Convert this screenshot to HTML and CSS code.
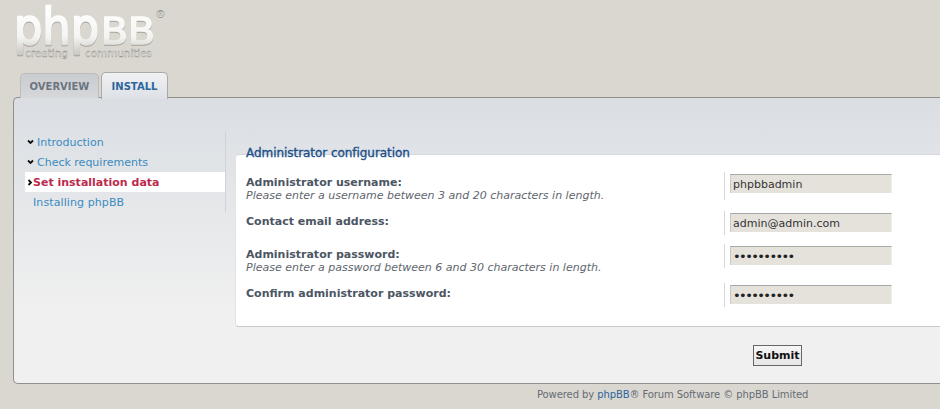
FILE: index.html
```html
<!DOCTYPE html>
<html lang="en">
<head>
  <meta charset="UTF-8" />
  <title>Administrator configuration | phpBB</title>
  <link rel="stylesheet" href="styles.css">
</head>
<body>

  <div class="logo">
    <svg width="170" height="65" viewBox="0 0 170 65">
      <defs>
        <linearGradient id="logoFill" gradientUnits="userSpaceOnUse" x1="0" y1="8" x2="0" y2="56">
          <stop offset="0" stop-color="#ffffff"/>
          <stop offset="0.6" stop-color="#f4f4f2"/>
          <stop offset="1" stop-color="#c6c5c0"/>
        </linearGradient>
      </defs>
      <text class="logo-word" x="14" y="44" textLength="85" lengthAdjust="spacingAndGlyphs" fill="url(#logoFill)" stroke="url(#logoFill)">php</text>
      <text class="logo-word logo-caps" x="101" y="44" textLength="54" lengthAdjust="spacingAndGlyphs" fill="url(#logoFill)" stroke="url(#logoFill)">BB</text>
      <text class="logo-tag" x="25" y="57" textLength="43" lengthAdjust="spacingAndGlyphs">creating</text>
      <text class="logo-tag" x="85" y="57" textLength="67" lengthAdjust="spacingAndGlyphs">communities</text>
      <text class="logo-reg" x="155" y="18">®</text>
    </svg>
  </div>

  <div class="tabs">
    <a href="#" class="tab">OVERVIEW</a>
    <a href="#" class="tab active">INSTALL</a>
  </div>

  <div class="panel">
    <div class="menu">
      <a href="#" class="done">
        <svg width="7" height="6" viewBox="0 0 7 6"><path d="M1 1.5 L3.5 4 L6 1.5" fill="none" stroke="#111" stroke-width="1.8"/></svg>
        Introduction
      </a>
      <a href="#" class="done">
        <svg width="7" height="6" viewBox="0 0 7 6"><path d="M1 1.5 L3.5 4 L6 1.5" fill="none" stroke="#111" stroke-width="1.8"/></svg>
        Check requirements
      </a>
      <a href="#" class="current">
        <svg width="6" height="7" viewBox="0 0 6 7"><path d="M1.5 1 L4 3.5 L1.5 6" fill="none" stroke="#111" stroke-width="1.8"/></svg>
        Set installation data
      </a>
      <a href="#" class="todo">Installing phpBB</a>
    </div>

    <div class="main">
      <div class="fieldset">
        <div class="legend">Administrator configuration</div>

        <div class="row row-1">
          <div class="label">
            <strong>Administrator username:</strong>
            <span>Please enter a username between 3 and 20 characters in length.</span>
          </div>
          <div class="field"><input type="text" value="phpbbadmin" /></div>
        </div>

        <div class="row row-2">
          <div class="label">
            <strong>Contact email address:</strong>
          </div>
          <div class="field"><input type="text" value="admin@admin.com" /></div>
        </div>

        <div class="row row-3">
          <div class="label">
            <strong>Administrator password:</strong>
            <span>Please enter a password between 6 and 30 characters in length.</span>
          </div>
          <div class="field"><input type="password" value="phpbbadmin" /></div>
        </div>

        <div class="row row-4">
          <div class="label">
            <strong>Confirm administrator password:</strong>
          </div>
          <div class="field"><input type="password" value="phpbbadmin" /></div>
        </div>
      </div>

      <div class="submit-row">
        <button class="submit">Submit</button>
      </div>
    </div>
  </div>

  <div class="footer">
    Powered by <a href="#">phpBB</a>® Forum Software © phpBB Limited
  </div>

</body>
</html>
```

FILE: styles.css
```css
* {
  box-sizing: border-box;
  margin: 0;
  padding: 0;
}

html, body {
  height: 409px;
  overflow: hidden;
}

body {
  background-color: #dad7d0;
  color: #4c5663;
  font-family: "DejaVu Sans", Verdana, sans-serif;
  font-size: 11px;
}

a {
  text-decoration: none;
}

.logo {
  height: 71px;
}

.logo svg {
  display: block;
}

.logo-word {
  font-family: "DejaVu Sans", sans-serif;
  font-size: 49px;
  font-weight: normal;
  stroke-width: 2.4px;
  stroke-linejoin: round;
  filter: drop-shadow(0 1px 0 #a3a19b);
}

.logo-caps {
  font-size: 37px;
  stroke-width: 1.6px;
}

.logo-tag {
  font-family: "DejaVu Sans", sans-serif;
  font-size: 10.5px;
  fill: #ffffff;
  stroke: #8a8880;
  stroke-width: 0.4px;
}

.logo-reg {
  font-family: "DejaVu Sans", sans-serif;
  font-size: 11px;
  fill: #f7f7f5;
  stroke: #99978f;
  stroke-width: 0.35px;
}

.tabs {
  display: flex;
  align-items: flex-end;
  gap: 2px;
  height: 27px;
  padding-left: 20px;
  position: relative;
  z-index: 1;
}

.tab {
  display: block;
  width: 79px;
  height: 25px;
  line-height: 26px;
  text-align: center;
  font-size: 10px;
  font-weight: bold;
  color: #6b7480;
  background: linear-gradient(to bottom, #c9ccd0, #d5d7da);
  border: 1px solid #bcbcb8;
  border-bottom: none;
  border-radius: 5px 5px 0 0;
}

.tab.active {
  width: 67px;
  height: 27px;
  line-height: 28px;
  color: #2c659d;
  background: linear-gradient(to bottom, #f0f1f3, #dde0e5);
  border: 1px solid #a9a9a6;
  border-bottom: none;
  margin-bottom: -1px;
}

.panel {
  display: flex;
  height: 287px;
  margin: -1px 0 0 13px;
  padding: 34px 0 0 11px;
  background: linear-gradient(to bottom, #dadee3, #f0f0f0 75%);
  border: 1px solid #8f8f8b;
  border-right: none;
  border-radius: 5px 0 0 5px;
}

.menu {
  width: 201px;
  height: 80px;
  flex-shrink: 0;
  border-right: 1px solid #d0d2d5;
}

.menu a {
  display: flex;
  align-items: center;
  height: 20px;
  padding-left: 2px;
  font-size: 11px;
  color: #3b8bc0;
}

.menu a svg {
  margin-right: 3px;
  flex-shrink: 0;
}

.menu a.current {
  font-weight: bold;
  color: #bc2a4d;
  background-color: #fff;
}

.menu a.current svg {
  margin-right: 0;
}

.menu a.todo {
  padding-left: 8px;
  letter-spacing: 0.1px;
}

.main {
  flex: 1;
  padding-left: 9px;
}

.fieldset {
  height: 173px;
  margin-top: 22px;
  padding: 0 0 0 10px;
  background-color: #fff;
  border-top: 1px solid #d5d7d9;
  border-bottom: 1px solid #c8c8c8;
  border-left: 1px solid #e2e2e2;
  border-radius: 4px 0 0 4px;
  position: relative;
}

.legend {
  position: absolute;
  top: -9px;
  left: 10px;
  font-size: 12px;
  line-height: 15px;
  letter-spacing: -0.05px;
  -webkit-text-stroke: 0.35px #1d4f8a;
  color: #1d4f8a;
}

.row {
  display: flex;
  justify-content: space-between;
}

.row-1 {
  padding-top: 17px;
  height: 56px;
}

.row-2 {
  height: 33px;
}

.row-3 {
  height: 39px;
}

.row-4 {
  height: 30px;
}

.label {
  padding-top: 5px;
  width: 478px;
}

.label strong {
  display: block;
  font-size: 11px;
  line-height: 12px;
}

.label span {
  display: block;
  font-style: italic;
  font-size: 11px;
  line-height: 13px;
  color: #60666e;
}

.field {
  flex: 1;
  align-self: flex-start;
  height: 24px;
  padding: 2px 0 0 5px;
  border-left: 1px solid #d6d6d6;
}

.row-1 .field {
  height: 28px;
}

.field input {
  display: block;
  width: 162px;
  height: 19px;
  padding: 0 2px;
  background-color: #e5e2dc;
  border: none;
  border-top: 1px solid #a8a8a4;
  border-left: 1px solid #c8c8c4;
  border-right: 1px solid #f0eeea;
  font-family: "DejaVu Sans", sans-serif;
  font-size: 11px;
  color: #333;
}

.field input[type="password"] {
  font-size: 13px;
  letter-spacing: -1.6px;
  color: #222;
}

.submit-row {
  padding: 18px 0 0 518px;
}

.submit {
  display: block;
  width: 49px;
  height: 21px;
  background: linear-gradient(to bottom, #f6f6f6, #e6e6e6);
  border: 1px solid #666;
  font-family: "DejaVu Sans", sans-serif;
  font-size: 11px;
  font-weight: bold;
  color: #111;
}

.footer {
  padding: 5px 0 0 537px;
  font-size: 10px;
  line-height: 12px;
  letter-spacing: -0.09px;
  color: #666c76;
}

.footer a {
  color: #2c659d;
}
```
